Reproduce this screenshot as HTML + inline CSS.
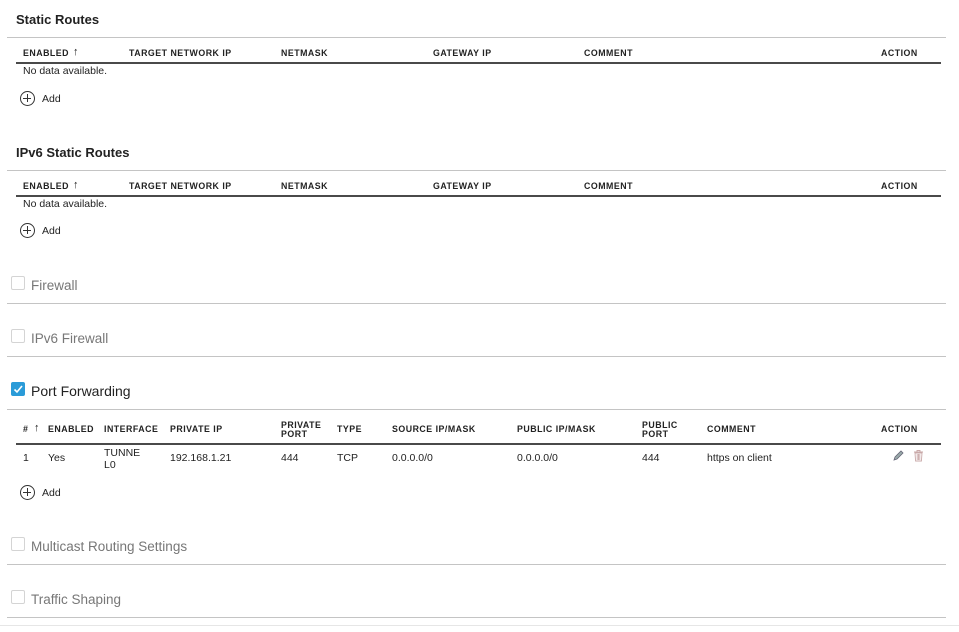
<!DOCTYPE html>
<html><head><meta charset="utf-8"><style>
*{margin:0;padding:0;box-sizing:border-box}
body{width:959px;height:632px;background:#fff;font-family:"Liberation Sans",sans-serif;color:#222;position:relative;overflow:hidden}
.a{position:absolute;white-space:nowrap;line-height:1}
.t{font-size:13px;font-weight:bold;color:#222}
.g{font-size:13.5px;color:#777}
.h{font-size:8.8px;font-weight:bold;color:#222;letter-spacing:.5px}
.d{font-size:10.5px;color:#222}
.ar{font-size:11px;font-weight:bold}
.sep{position:absolute;left:7px;width:939px;height:1px;background:#c4c4c4}
.thick{position:absolute;left:16px;width:925px;height:2px;background:#4a4a4a}
.cb{position:absolute;left:11px;width:14px;height:14px;border:1px solid #d4d4d4;border-radius:2px;background:#fff}
.add{position:absolute;left:20px;width:15px;height:15px;border:1.5px solid #333;border-radius:50%}
.add:before{content:"";position:absolute;left:2px;top:5.5px;width:8px;height:1.5px;background:#333}
.add:after{content:"";position:absolute;left:5.5px;top:2px;width:1.5px;height:8px;background:#333}
</style></head><body>

<div class="a t" style="left:16px;top:13px">Static Routes</div>
<div class="sep" style="top:37px"></div>
<div class="a h" style="left:23px;top:49px">ENABLED</div>
<div class="a ar" style="left:73px;top:47px">↑</div>
<div class="a h" style="left:129px;top:49px">TARGET NETWORK IP</div>
<div class="a h" style="left:281px;top:49px">NETMASK</div>
<div class="a h" style="left:433px;top:49px">GATEWAY IP</div>
<div class="a h" style="left:584px;top:49px">COMMENT</div>
<div class="a h" style="left:881px;top:49px">ACTION</div>
<div class="thick" style="top:62px"></div>
<div class="a d" style="left:23px;top:66px">No data available.</div>
<div class="add" style="top:91px"></div>
<div class="a d" style="left:42px;top:94px">Add</div>

<div class="a t" style="left:16px;top:146px">IPv6 Static Routes</div>
<div class="sep" style="top:170px"></div>
<div class="a h" style="left:23px;top:182px">ENABLED</div>
<div class="a ar" style="left:73px;top:180px">↑</div>
<div class="a h" style="left:129px;top:182px">TARGET NETWORK IP</div>
<div class="a h" style="left:281px;top:182px">NETMASK</div>
<div class="a h" style="left:433px;top:182px">GATEWAY IP</div>
<div class="a h" style="left:584px;top:182px">COMMENT</div>
<div class="a h" style="left:881px;top:182px">ACTION</div>
<div class="thick" style="top:195px"></div>
<div class="a d" style="left:23px;top:199px">No data available.</div>
<div class="add" style="top:223px"></div>
<div class="a d" style="left:42px;top:226px">Add</div>

<div class="cb" style="top:276px"></div>
<div class="a g" style="left:31px;top:279px">Firewall</div>
<div class="sep" style="top:303px"></div>
<div class="cb" style="top:329px"></div>
<div class="a g" style="left:31px;top:332px">IPv6 Firewall</div>
<div class="sep" style="top:356px"></div>

<div class="cb" style="top:382px;background:#2a9bd8;border-color:#2a9bd8"><svg width="12" height="12" style="position:absolute;left:0;top:0"><path d="M2.5 6.5 L5 9 L10 3" stroke="#fff" stroke-width="1.6" fill="none"/></svg></div>
<div class="a" style="left:31px;top:384px;font-size:14px;color:#222">Port Forwarding</div>
<div class="sep" style="top:409px"></div>
<div class="a h" style="left:23px;top:425px">#</div>
<div class="a ar" style="left:34px;top:423px">↑</div>
<div class="a h" style="left:48px;top:425px">ENABLED</div>
<div class="a h" style="left:104px;top:425px">INTERFACE</div>
<div class="a h" style="left:170px;top:425px">PRIVATE IP</div>
<div class="a h" style="left:281px;top:421px;line-height:9px">PRIVATE<br>PORT</div>
<div class="a h" style="left:337px;top:425px">TYPE</div>
<div class="a h" style="left:392px;top:425px">SOURCE IP/MASK</div>
<div class="a h" style="left:517px;top:425px">PUBLIC IP/MASK</div>
<div class="a h" style="left:642px;top:421px;line-height:9px">PUBLIC<br>PORT</div>
<div class="a h" style="left:707px;top:425px">COMMENT</div>
<div class="a h" style="left:881px;top:425px">ACTION</div>
<div class="thick" style="top:443px"></div>
<div class="a d" style="left:23px;top:453px">1</div>
<div class="a d" style="left:48px;top:453px">Yes</div>
<div class="a d" style="left:104px;top:447px;line-height:12px">TUNNE<br>L0</div>
<div class="a d" style="left:170px;top:453px">192.168.1.21</div>
<div class="a d" style="left:281px;top:453px">444</div>
<div class="a d" style="left:337px;top:453px">TCP</div>
<div class="a d" style="left:392px;top:453px">0.0.0.0/0</div>
<div class="a d" style="left:517px;top:453px">0.0.0.0/0</div>
<div class="a d" style="left:642px;top:453px">444</div>
<div class="a d" style="left:707px;top:453px">https on client</div>
<svg class="a" style="left:892px;top:450px" width="12" height="12"><path d="M2 10 L3 7 L9 1 L11 3 L5 9 Z" fill="#9aa" stroke="#667" stroke-width=".8"/></svg>
<svg class="a" style="left:913px;top:449px" width="11" height="13"><path d="M1 3 H10 M4 3 V1.5 H7 V3 M2 4 L2.6 12 H8.4 L9 4 Z M4.2 5 V11 M5.5 5 V11 M6.8 5 V11" fill="none" stroke="#c9a9a9" stroke-width=".9"/></svg>
<div class="add" style="top:485px"></div>
<div class="a d" style="left:42px;top:488px">Add</div>

<div class="cb" style="top:537px"></div>
<div class="a g" style="left:31px;top:540px">Multicast Routing Settings</div>
<div class="sep" style="top:564px"></div>
<div class="cb" style="top:590px"></div>
<div class="a g" style="left:31px;top:593px">Traffic Shaping</div>
<div class="sep" style="top:617px"></div>
<div style="position:absolute;left:0;top:625px;width:959px;height:1px;background:#e6e6e6"></div>
</body></html>
